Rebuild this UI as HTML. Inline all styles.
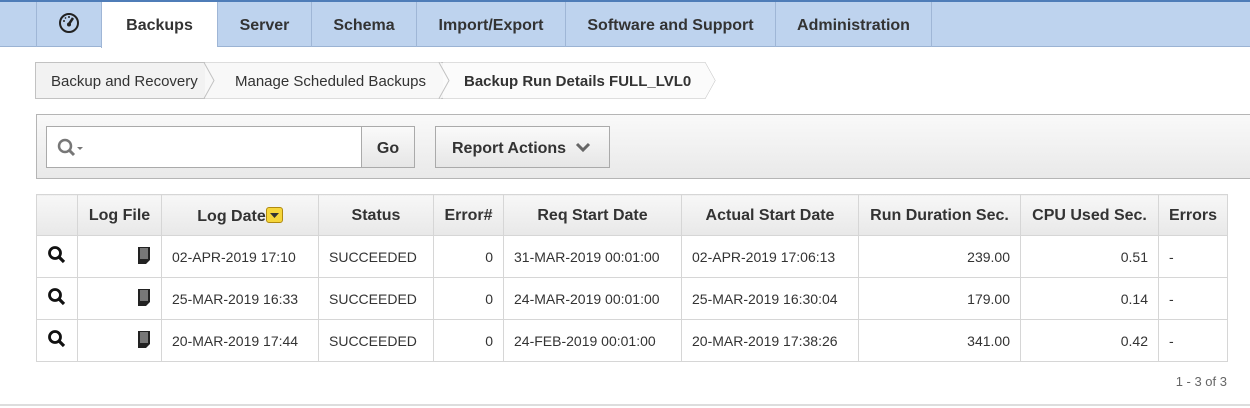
<!DOCTYPE html>
<html><head><meta charset="utf-8"><style>
*{box-sizing:border-box;margin:0;padding:0}
body{width:1250px;height:408px;background:#fff;font-family:"Liberation Sans",Arial,sans-serif;color:#333;position:relative;overflow:hidden}
.bar{position:absolute;left:0;top:0;width:1250px;height:47px;background:#bed3ee;border-top:2px solid #4f7db8;border-bottom:1px solid #9bb3d3}
.tab{position:absolute;top:0;height:45px;border-left:1px solid #9fb6d6;font-size:16px;font-weight:bold;color:#333;text-align:center;line-height:47px}
.tab.act{background:#fff;height:46px}
.bc{position:absolute;top:64px;height:36px;font-size:15px;line-height:36px;color:#333}
.tb{position:absolute;left:36px;top:114px;width:1214px;height:65px;background:linear-gradient(#f9f9f9,#e9e9e9);border:1px solid #b5b5b5;border-right:none}
table{position:absolute;left:36px;top:194px;border-collapse:collapse;font-size:14px}
td,th{border:1px solid #d6d6d6;height:42px;padding:0 10px}
th{background:linear-gradient(#f7f7f7,#e8e8e8);font-size:16px;color:#333;height:41px;padding-top:2px}
td{color:#333}
.r{text-align:right}
</style></head><body>
<div class="bar">
<div class="tab" style="left:36px;width:65px">
<svg width="22" height="22" viewBox="0 0 22 22" style="position:absolute;left:21px;top:10px"><circle cx="11" cy="11" r="9" fill="none" stroke="#222" stroke-width="2"/><path d="M11 12 L15 6" stroke="#222" stroke-width="2.5"/><circle cx="11" cy="12.5" r="2" fill="#222"/><path d="M5 9h2M7 5.5l1 1M11 4v2" stroke="#222" stroke-width="1.5"/></svg></div>
<div class="tab act" style="left:101px;width:116px">Backups</div>
<div class="tab" style="left:217px;width:94px">Server</div>
<div class="tab" style="left:311px;width:105px">Schema</div>
<div class="tab" style="left:416px;width:149px">Import/Export</div>
<div class="tab" style="left:565px;width:210px">Software and Support</div>
<div class="tab" style="left:775px;width:157px;border-right:1px solid #9fb6d6">Administration</div>
</div>
<svg style="position:absolute;left:35px;top:62px" width="690" height="38">
<path d="M0.5 0.5H670L680 18.5L670 36.5H0.5Z" fill="#f2f2f2" stroke="#c2c2c2"/>
<path d="M170 0.5H406L416 18.5L406 36.5H170" fill="#f8f8f8"/>
<path d="M408 0.5H670L680 18.5L670 36.5H408" fill="#fbfbfb"/>
<path d="M169 0.5L179 18.5L169 36.5M404 0.5L414 18.5L404 36.5" fill="none" stroke="#c2c2c2"/>
</svg>
<div class="bc" style="left:51px">Backup and Recovery</div>
<div class="bc" style="left:235px">Manage Scheduled Backups</div>
<div class="bc" style="left:464px;font-weight:bold">Backup Run Details FULL_LVL0</div>
<div class="tb">
<div style="position:absolute;left:9px;top:11px;width:353px;height:42px;background:#fff;border:1px solid #aaa"></div>
<svg style="position:absolute;left:20px;top:23px" width="32" height="22"><circle cx="8" cy="8" r="6" fill="none" stroke="#777" stroke-width="2.5"/><path d="M12 12l5 5" stroke="#777" stroke-width="3"/><path d="M20 9h6l-3 3z" fill="#777"/></svg>
<div style="position:absolute;left:324px;top:11px;width:54px;height:42px;background:linear-gradient(#fafafa,#e6e6e6);border:1px solid #aaa;font-weight:bold;font-size:16px;text-align:center;line-height:43px">Go</div>
<div style="position:absolute;left:398px;top:11px;width:175px;height:42px;background:linear-gradient(#fafafa,#e6e6e6);border:1px solid #aaa;font-weight:bold;font-size:16px;line-height:43px;padding-left:16px">Report Actions <svg width="16" height="12" style="margin-left:4px"><path d="M2 3l6 6 6-6" fill="none" stroke="#666" stroke-width="3"/></svg></div>
</div>
<table>
<tr><th style="width:41px"></th><th style="width:84px">Log File</th><th style="width:157px">Log Date<span style="display:inline-block;width:17px;height:16px;background:#f5d53a;border:1px solid #b08a10;border-radius:3px;vertical-align:-2px;position:relative"><svg width="15" height="14" style="position:absolute;left:0;top:0"><path d="M3 5h9l-4.5 5z" fill="#333"/></svg></span></th><th style="width:115px">Status</th><th style="width:70px">Error#</th><th style="width:178px">Req Start Date</th><th style="width:177px">Actual Start Date</th><th style="width:162px">Run Duration Sec.</th><th style="width:138px">CPU Used Sec.</th><th style="width:69px">Errors</th></tr>
<tr><td><svg width="20" height="20"><circle cx="8" cy="8" r="5.5" fill="none" stroke="#111" stroke-width="2.8"/><path d="M12 12l5 5" stroke="#111" stroke-width="3.2"/></svg></td><td class="r"><svg width="14" height="20"><path d="M1 2h12v13l-4 4H1z" fill="#222"/><rect x="3" y="3" width="8" height="11" fill="#777"/></svg></td><td>02-APR-2019 17:10</td><td>SUCCEEDED</td><td class="r">0</td><td>31-MAR-2019 00:01:00</td><td>02-APR-2019 17:06:13</td><td class="r">239.00</td><td class="r">0.51</td><td>-</td></tr>
<tr><td><svg width="20" height="20"><circle cx="8" cy="8" r="5.5" fill="none" stroke="#111" stroke-width="2.8"/><path d="M12 12l5 5" stroke="#111" stroke-width="3.2"/></svg></td><td class="r"><svg width="14" height="20"><path d="M1 2h12v13l-4 4H1z" fill="#222"/><rect x="3" y="3" width="8" height="11" fill="#777"/></svg></td><td>25-MAR-2019 16:33</td><td>SUCCEEDED</td><td class="r">0</td><td>24-MAR-2019 00:01:00</td><td>25-MAR-2019 16:30:04</td><td class="r">179.00</td><td class="r">0.14</td><td>-</td></tr>
<tr><td><svg width="20" height="20"><circle cx="8" cy="8" r="5.5" fill="none" stroke="#111" stroke-width="2.8"/><path d="M12 12l5 5" stroke="#111" stroke-width="3.2"/></svg></td><td class="r"><svg width="14" height="20"><path d="M1 2h12v13l-4 4H1z" fill="#222"/><rect x="3" y="3" width="8" height="11" fill="#777"/></svg></td><td>20-MAR-2019 17:44</td><td>SUCCEEDED</td><td class="r">0</td><td>24-FEB-2019 00:01:00</td><td>20-MAR-2019 17:38:26</td><td class="r">341.00</td><td class="r">0.42</td><td>-</td></tr>
</table>
<div style="position:absolute;right:23px;top:374px;font-size:13px;color:#666">1 - 3 of 3</div>
<div style="position:absolute;left:0;top:404px;width:1250px;height:2px;background:#ddd"></div>
</body></html>
